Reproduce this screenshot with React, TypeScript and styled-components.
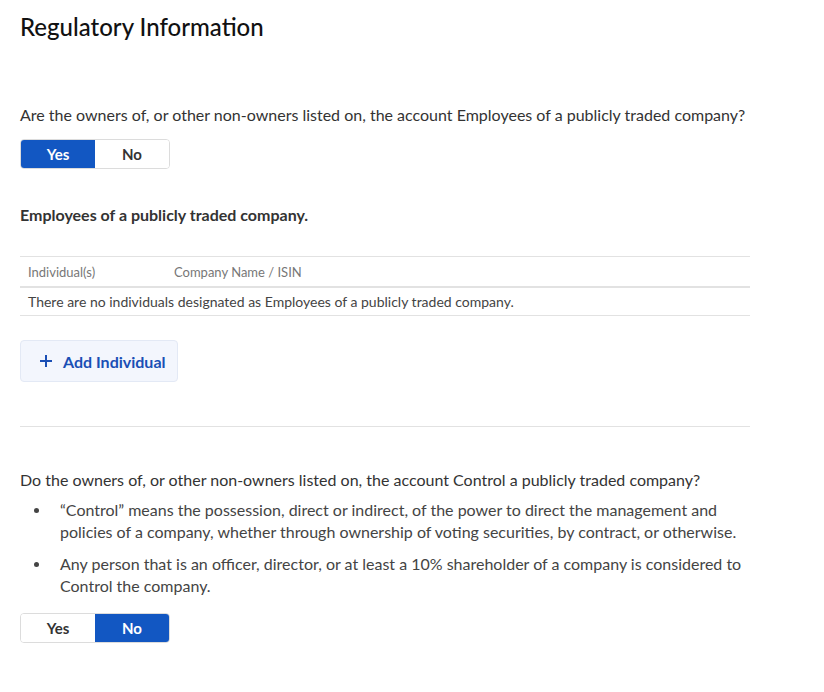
import React, { useState } from "react";
import styled, { createGlobalStyle } from "styled-components";

const Global = createGlobalStyle`
  html, body { margin: 0; padding: 0; background: #fff; }
  body { font-family: Lato, "Open Sans", sans-serif; color: #333; }
`;

const Page = styled.div`
  padding: 12px 20px 40px 20px;
  width: 730px;
`;

const Title = styled.h1`
  margin: 0;
  font-size: 24px;
  line-height: 30px;
  font-weight: 500;
  color: #111;
`;

const Question = styled.p<{ $top: number }>`
  margin: ${(p) => p.$top}px 0 0 0;
  font-size: 16px;
  line-height: 22px;
  color: #333;
  white-space: nowrap;
`;

const Toggle = styled.div<{ $top: number }>`
  display: inline-flex;
  margin-top: ${(p) => p.$top}px;
  height: 30px;
  border: 1px solid #dcdcdc;
  border-radius: 4px;
  box-sizing: border-box;
  overflow: hidden;
`;

const ToggleBtn = styled.button<{ $active: boolean }>`
  width: 74px;
  border: none;
  margin: 0;
  padding: 0;
  font-family: inherit;
  font-size: 15px;
  font-weight: 700;
  cursor: pointer;
  background: ${(p) => (p.$active ? "#1257c2" : "#fff")};
  color: ${(p) => (p.$active ? "#fff" : "#333")};
`;

const SubHeading = styled.h3`
  margin: 36px 0 0 0;
  font-size: 16px;
  line-height: 20px;
  font-weight: 700;
  color: #333;
`;

const Table = styled.table`
  margin-top: 31px;
  width: 730px;
  border-collapse: collapse;
  table-layout: fixed;
  border-top: 1px solid #e2e2e2;
`;

const Th = styled.th<{ $w?: number }>`
  text-align: left;
  font-size: 13px;
  font-weight: 400;
  color: #777;
  height: 29px;
  padding: 0 0 0 8px;
  width: ${(p) => (p.$w ? `${p.$w}px` : "auto")};
  border-bottom: 2px solid #e2e2e2;
`;

const Td = styled.td`
  font-size: 14px;
  color: #444;
  height: 27px;
  padding: 0 0 0 8px;
  border-bottom: 1px solid #e2e2e2;
`;

const AddButton = styled.button`
  display: flex;
  align-items: center;
  gap: 10px;
  margin-top: 24px;
  height: 42px;
  width: 158px;
  padding: 0 0 0 18px;
  background: #f3f6fd;
  border: 1px solid #e3e9f5;
  border-radius: 4px;
  font-family: inherit;
  font-size: 16px;
  font-weight: 700;
  color: #1a4fb5;
  cursor: pointer;
`;

const Divider = styled.hr`
  margin: 44px 0 0 0;
  border: none;
  border-top: 1px solid #e2e2e2;
  width: 730px;
`;

const Bullets = styled.ul`
  margin: 8px 0 0 0;
  padding: 0 0 0 40px;
  width: 690px;
  list-style: none;
`;

const Bullet = styled.li`
  position: relative;
  font-size: 16px;
  line-height: 22px;
  color: #444;
  margin-bottom: 10px;
  &::before {
    content: "";
    position: absolute;
    left: -26px;
    top: 9px;
    width: 5px;
    height: 5px;
    border-radius: 50%;
    background: #444;
  }
`;

const Plus = () => (
  <svg width="14" height="14" viewBox="0 0 14 14">
    <path d="M7 1v12M1 7h12" stroke="#1a4fb5" strokeWidth="2" />
  </svg>
);

export default function App() {
  const [a, setA] = useState(true);
  const [b, setB] = useState(false);
  return (
    <>
      <Global />
      <Page>
        <Title>Regulatory Information</Title>
        <Question $top={62}>
          Are the owners of, or other non-owners listed on, the account Employees of a publicly traded company?
        </Question>
        <Toggle $top={13}>
          <ToggleBtn $active={a} onClick={() => setA(true)}>Yes</ToggleBtn>
          <ToggleBtn $active={!a} onClick={() => setA(false)}>No</ToggleBtn>
        </Toggle>
        <SubHeading>Employees of a publicly traded company.</SubHeading>
        <Table>
          <thead>
            <tr>
              <Th $w={138}>Individual(s)</Th>
              <Th>Company Name / ISIN</Th>
            </tr>
          </thead>
          <tbody>
            <tr>
              <Td colSpan={2}>
                There are no individuals designated as Employees of a publicly traded company.
              </Td>
            </tr>
          </tbody>
        </Table>
        <AddButton>
          <Plus />
          Add Individual
        </AddButton>
        <Divider />
        <Question $top={42}>
          Do the owners of, or other non-owners listed on, the account Control a publicly traded company?
        </Question>
        <Bullets>
          <Bullet>
            “Control” means the possession, direct or indirect, of the power to direct the management and policies of a company, whether through ownership of voting securities, by contract, or otherwise.
          </Bullet>
          <Bullet>
            Any person that is an officer, director, or at least a 10% shareholder of a company is considered to Control the company.
          </Bullet>
        </Bullets>
        <Toggle $top={6}>
          <ToggleBtn $active={b} onClick={() => setB(true)}>Yes</ToggleBtn>
          <ToggleBtn $active={!b} onClick={() => setB(false)}>No</ToggleBtn>
        </Toggle>
      </Page>
    </>
  );
}
